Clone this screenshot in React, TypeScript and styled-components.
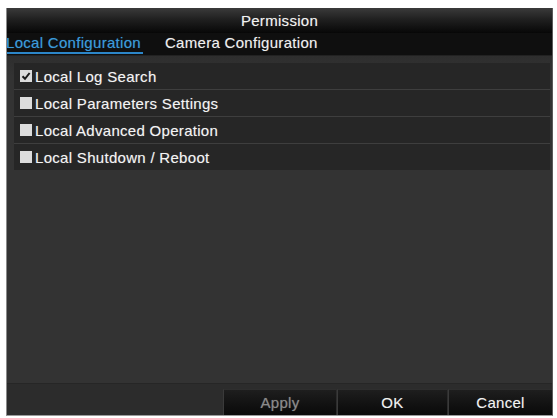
import * as React from 'react';
import styled, { createGlobalStyle } from 'styled-components';

const GlobalStyle = createGlobalStyle`
  html, body {
    margin: 0;
    padding: 0;
    background: #ffffff;
  }
  body {
    padding: 8px 0 0 6px;
    font-family: 'Liberation Sans', Arial, sans-serif;
    letter-spacing: 0.3px;
  }
`;

const Dialog = styled.div`
  display: flex;
  flex-direction: column;
  width: 547px;
  height: 408px;
  box-sizing: border-box;
  background: #333333;
  border-left: 1px solid #8a8a8a;
  border-right: 1px solid #5a5a5a;
  border-bottom: 1px solid #9a9a9a;
  overflow: hidden;
`;

const TitleBar = styled.div`
  height: 25px;
  display: flex;
  align-items: center;
  justify-content: center;
  background: linear-gradient(#3a3a3a, #202020 45%, #070707);
  color: #f2f2f2;
  font-size: 15px;
  text-shadow: 0 0 1px rgba(255, 255, 255, 0.35);
`;

const TabBar = styled.div`
  height: 22px;
  display: flex;
  align-items: flex-start;
  gap: 22px;
  background: #0f0f0f;
  border-bottom: 1px solid #222;
`;

const Tab = styled.div<{ $active?: boolean }>`
  height: 19px;
  line-height: 19px;
  font-size: 15px;
  color: ${p => (p.$active ? '#3a9bdc' : '#f0f0f0')};
  border-bottom: 2px solid ${p => (p.$active ? '#2c86c8' : 'transparent')};
  padding-right: ${p => (p.$active ? '2px' : '0')};
  margin-left: ${p => (p.$active ? '-1px' : '0')};
  text-shadow: 0 0 1px ${p => (p.$active ? 'rgba(58, 155, 220, 0.5)' : 'rgba(255, 255, 255, 0.35)')};
`;

const Content = styled.div`
  flex: 1;
  padding: 7px 2px 0 7px;
  background: linear-gradient(#2e2e2e, #333333 20px);
`;

const List = styled.div`
  display: flex;
  flex-direction: column;
  background: #252525;
`;

const Row = styled.label`
  height: 26px;
  display: flex;
  align-items: center;
  gap: 3px;
  padding-left: 6px;
  color: #f4f4f4;
  font-size: 15px;
  background: #262626;
  text-shadow: 0 0 1px rgba(255, 255, 255, 0.35);
  & + & {
    border-top: 1px solid #3e3e3e;
  }
`;

const Box = styled.span`
  width: 12px;
  height: 12px;
  flex: none;
  background: #dcdcdc;
  display: flex;
  align-items: center;
  justify-content: center;
`;

const Footer = styled.div`
  height: 31px;
  display: flex;
  justify-content: flex-end;
  align-items: flex-end;
  background: #2c2c2c;
  border-top: 1px solid #262626;
`;

const Button = styled.button<{ $w: number; $disabled?: boolean }>`
  width: ${p => p.$w}px;
  height: 26px;
  margin-left: 1px;
  border: none;
  border-top: 1px solid #2e2e2e;
  border-left: 1px solid #3a3a3a;
  background: linear-gradient(#1e1e1e, #111111 60%, #0a0a0a);
  color: ${p => (p.$disabled ? '#8a8a8a' : '#f2f2f2')};
  font-family: 'Liberation Sans', Arial, sans-serif;
  font-size: 15px;
  letter-spacing: 0.3px;
  text-shadow: 0 0 1px rgba(255, 255, 255, 0.3);
  padding: 0;
`;

const Check = () => (
  <svg width="10" height="10" viewBox="0 0 10 10">
    <path d="M1.5 5.2 L4 7.8 L8.6 2" fill="none" stroke="#1a1a1a" strokeWidth="2" />
  </svg>
);

const items = [
  { label: 'Local Log Search', checked: true },
  { label: 'Local Parameters Settings', checked: false },
  { label: 'Local Advanced Operation', checked: false },
  { label: 'Local Shutdown / Reboot', checked: false },
];

export default function App() {
  return (
    <>
      <GlobalStyle />
      <Dialog>
        <TitleBar>Permission</TitleBar>
        <TabBar>
          <Tab $active>Local Configuration</Tab>
          <Tab>Camera Configuration</Tab>
        </TabBar>
        <Content>
          <List>
            {items.map(it => (
              <Row key={it.label}>
                <Box>{it.checked && <Check />}</Box>
                {it.label}
              </Row>
            ))}
          </List>
        </Content>
        <Footer>
          <Button $w={113} $disabled>Apply</Button>
          <Button $w={110}>OK</Button>
          <Button $w={104}>Cancel</Button>
        </Footer>
      </Dialog>
    </>
  );
}
